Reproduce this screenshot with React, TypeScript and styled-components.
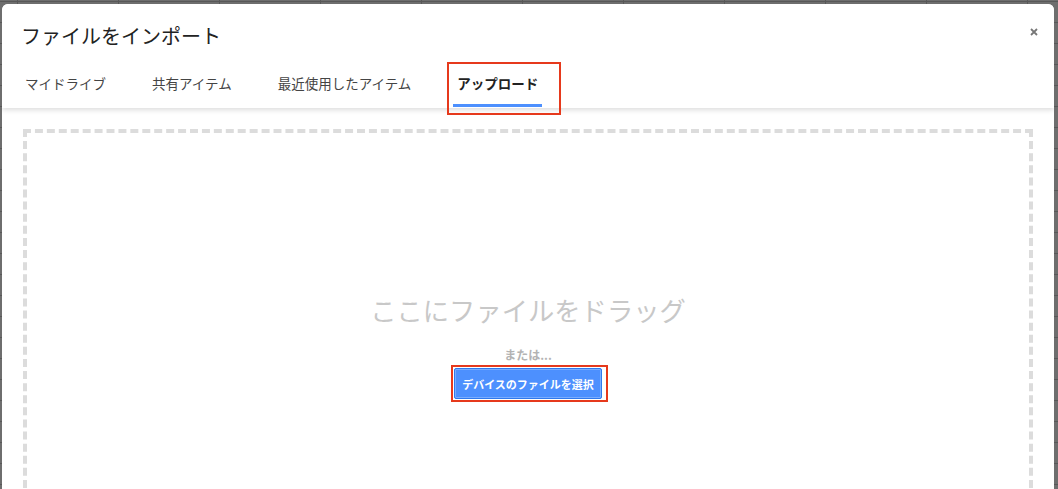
import styled, { createGlobalStyle } from "styled-components";

const GlobalStyle = createGlobalStyle`
  html, body {
    margin: 0;
    height: 100%;
    overflow: hidden;
  }

  body {
    font-family: "Noto Sans CJK JP", "Noto Sans", sans-serif;
    background-color: #6e6e6e;
    background-image: linear-gradient(to right, #585858 1px, transparent 1px),
      linear-gradient(to bottom, #585858 1px, transparent 1px);
    background-size: 101px 100%, 100% 21px;
    background-position: 17px 0, 0 22px;
  }
`;

const Backdrop = styled.div`
  height: 100vh;
  box-sizing: border-box;
  padding: 4px 4px 0 2px;
`;

const Dialog = styled.div`
  height: 100%;
  background: #fff;
  border-radius: 6px 6px 0 0;
  display: flex;
  flex-direction: column;
  overflow: hidden;
`;

const Header = styled.div`
  position: relative;
  z-index: 1;
  background: #fff;
  padding-left: 19px;
  box-shadow: 0 2px 5px rgba(0, 0, 0, 0.14);
`;

const TitleRow = styled.div`
  display: flex;
  justify-content: space-between;
  align-items: flex-start;
  padding: 20px 16px 0 0;
`;

const Title = styled.h1`
  margin: 0;
  font-size: 20px;
  line-height: 24px;
  font-weight: 400;
  color: #222;
`;

const CloseButton = styled.button`
  display: flex;
  border: none;
  background: none;
  padding: 0;
  margin-top: 4px;
  cursor: pointer;
`;

const Tabs = styled.div`
  display: flex;
  gap: 38px;
  margin-top: 14px;
  padding-bottom: 1px;
`;

const Tab = styled.div<{ $active?: boolean }>`
  position: relative;
  box-sizing: border-box;
  height: 45px;
  padding: 12px 4px 0;
  font-size: 13.5px;
  line-height: 18px;
  font-weight: ${(p) => (p.$active ? 700 : 400)};
  color: ${(p) => (p.$active ? "#222" : "#444")};
  border-bottom: 3px solid ${(p) => (p.$active ? "#4d90fe" : "transparent")};
`;

const Highlight = styled.span<{ $inset: string }>`
  position: absolute;
  inset: ${(p) => p.$inset};
  border: 2px solid #e6391c;
  pointer-events: none;
`;

const Body = styled.div`
  flex: 1;
  padding: 21px;
`;

const DropZone = styled.div`
  height: 480px;
  box-sizing: border-box;
  border: 4px dashed #dcdcdc;
  display: flex;
  flex-direction: column;
  align-items: center;
  padding-top: 161px;
`;

const DropText = styled.div`
  font-size: 26.3px;
  line-height: 32px;
  color: #c8c8c8;
`;

const OrText = styled.div`
  margin-top: 21px;
  font-size: 12px;
  line-height: 16px;
  font-weight: 700;
  color: #b3b3b3;
`;

const ButtonWrap = styled.div`
  position: relative;
  margin-top: 5px;
`;

const PickButton = styled.button`
  height: 31px;
  padding: 0 7px;
  border: 1px solid #3079ed;
  border-radius: 2px;
  background: #4d90fe;
  box-shadow: inset 0 0 0 1px rgba(255, 255, 255, 0.25);
  color: #fff;
  font-family: inherit;
  font-size: 11px;
  font-weight: 700;
  cursor: pointer;
`;

const tabs = ["マイドライブ", "共有アイテム", "最近使用したアイテム", "アップロード"];

const App = () => {
  return (
    <>
      <GlobalStyle />
      <Backdrop>
        <Dialog>
          <Header>
            <TitleRow>
              <Title>ファイルをインポート</Title>
              <CloseButton aria-label="閉じる">
                <svg width="8" height="8" viewBox="0 0 8 8">
                  <path d="M1 1L7 7M7 1L1 7" stroke="#777" strokeWidth="1.8" />
                </svg>
              </CloseButton>
            </TitleRow>
            <Tabs>
              {tabs.map((t, i) => (
                <Tab key={t} $active={i === 3}>
                  {t}
                  {i === 3 && <Highlight $inset="0 -19px -11px -6px" />}
                </Tab>
              ))}
            </Tabs>
          </Header>
          <Body>
            <DropZone>
              <DropText>ここにファイルをドラッグ</DropText>
              <OrText>または...</OrText>
              <ButtonWrap>
                <PickButton>デバイスのファイルを選択</PickButton>
                <Highlight $inset="-3px -6px -3px -3px" />
              </ButtonWrap>
            </DropZone>
          </Body>
        </Dialog>
      </Backdrop>
    </>
  );
};

export default App;
